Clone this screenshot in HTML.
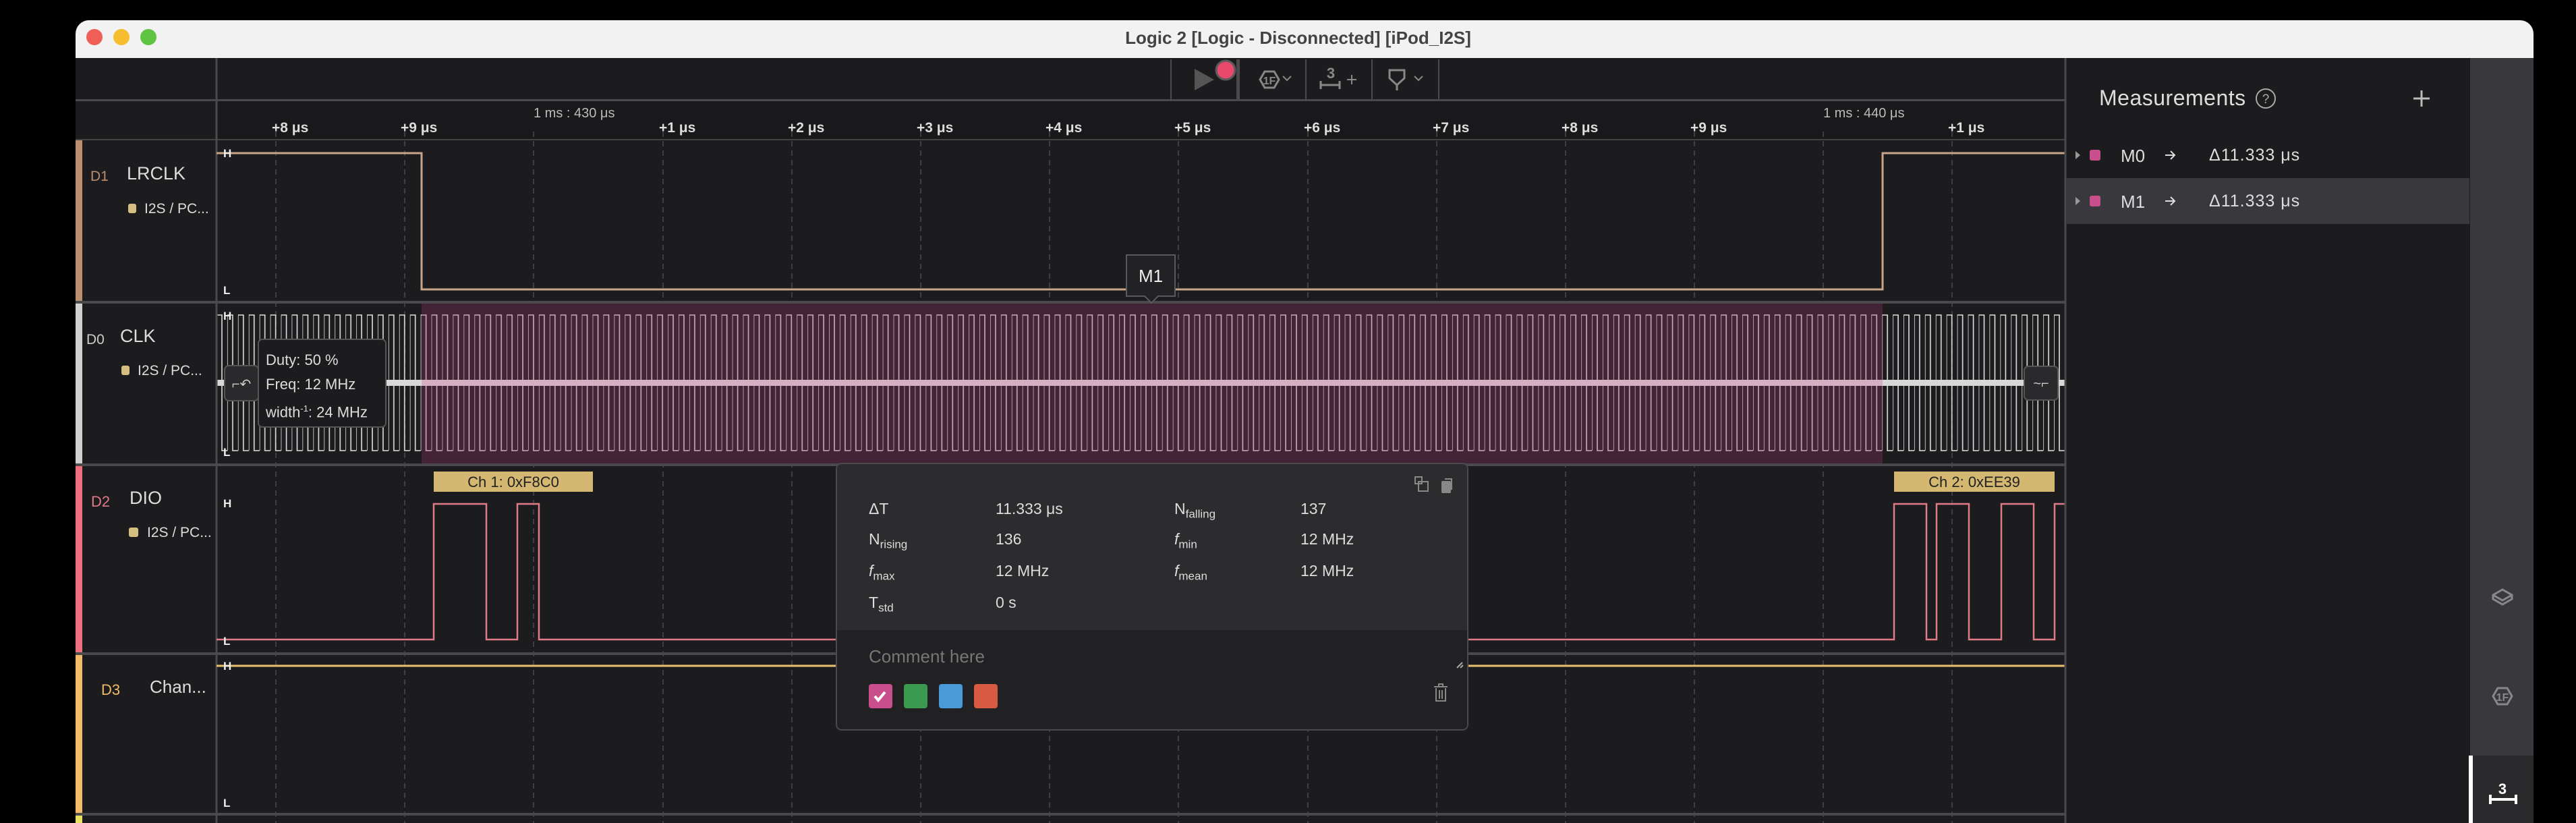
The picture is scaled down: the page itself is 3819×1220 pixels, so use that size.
<!DOCTYPE html>
<html><head><meta charset="utf-8"><style>
*{margin:0;padding:0;box-sizing:border-box}
body{width:3819px;height:1220px;background:#000;position:relative;overflow:hidden;font-family:"Liberation Sans",sans-serif}
.a{position:absolute;white-space:nowrap}
.t{color:#ddd}
</style></head><body>
<div class="a" style="left:112px;top:30px;width:3644px;height:56px;background:#f2f2f2;border-radius:20px 20px 0 0"></div>
<div class="a" style="left:128px;top:43px;width:24px;height:24px;border-radius:50%;background:#ee5f57"></div>
<div class="a" style="left:168px;top:43px;width:24px;height:24px;border-radius:50%;background:#f5bd2f"></div>
<div class="a" style="left:208px;top:43px;width:24px;height:24px;border-radius:50%;background:#5fc442"></div>
<div class="a" style="left:0;width:3819px;top:41px;text-align:center;font-size:26px;font-weight:bold;color:#444;padding-left:30px">Logic 2 [Logic - Disconnected] [iPod_I2S]</div>
<div class="a" style="left:112px;top:86px;width:3644px;height:1134px;background:#1c1c1e"></div>

<svg class="a" style="left:0;top:0" width="3819" height="1220" viewBox="0 0 3819 1220">
<defs>
<pattern id="cw" patternUnits="userSpaceOnUse" x="321" y="0" width="15.93" height="1220"><path d="M0,668V467H8V668H16" fill="none" stroke="#e0e0e0" stroke-width="1.6"/></pattern>
<pattern id="cp" patternUnits="userSpaceOnUse" x="321" y="0" width="15.93" height="1220"><path d="M0,668V467H8V668H16" fill="none" stroke="#cfaabb" stroke-width="1.6"/></pattern>
</defs>
<rect x="112" y="86" width="2950" height="62" fill="#1c1c1e"/>
<rect x="112" y="147" width="2950" height="3" fill="#4a4a4c"/>
<g stroke="#4a4a4c" stroke-width="2"><line x1="1736" y1="88" x2="1736" y2="148"/><line x1="1936" y1="88" x2="1936" y2="148"/><line x1="2034" y1="88" x2="2034" y2="148"/><line x1="2133" y1="88" x2="2133" y2="148"/></g>
<rect x="1833" y="88" width="5" height="60" fill="#4a4a4c"/>
<path d="M1771,102L1800,118L1771,134Z" fill="#555"/>
<circle cx="1817" cy="104" r="14" fill="#e8486a" stroke="#5a5a5c" stroke-width="3"/>
<path d="M1868,118l7,-12h14l7,12l-7,12h-14z" fill="none" stroke="#888" stroke-width="3"/>
<text x="1882" y="125" font-size="16" font-weight="bold" fill="#888" text-anchor="middle">1F</text>
<path d="M1902,113l6,6l6,-6" fill="none" stroke="#888" stroke-width="2"/>
<text x="1973" y="116" font-size="22" font-weight="bold" fill="#888" text-anchor="middle">3</text>
<path d="M1958,120v12M1958,126h28M1986,120v12" stroke="#888" stroke-width="3" fill="none"/>
<path d="M1997,118h14M2004,111v14" stroke="#888" stroke-width="2"/>
<path d="M2060,104h22v12l-11,10l-11,-10z M2071,126v8" fill="none" stroke="#888" stroke-width="3"/>
<path d="M2097,113l6,6l6,-6" fill="none" stroke="#888" stroke-width="2"/>
<rect x="321" y="150" width="2741" height="58" fill="#19191b"/>
<rect x="112" y="206" width="2950" height="2" fill="#444"/>
<g stroke="#3e3e40" stroke-width="2" stroke-dasharray="8 6">
<line x1="409" y1="195" x2="409" y2="1220"/><line x1="600" y1="195" x2="600" y2="1220"/><line x1="791" y1="195" x2="791" y2="1220"/><line x1="983" y1="195" x2="983" y2="1220"/><line x1="1174" y1="195" x2="1174" y2="1220"/><line x1="1365" y1="195" x2="1365" y2="1220"/><line x1="1556" y1="195" x2="1556" y2="1220"/><line x1="1747" y1="195" x2="1747" y2="1220"/><line x1="1939" y1="195" x2="1939" y2="1220"/><line x1="2130" y1="195" x2="2130" y2="1220"/><line x1="2321" y1="195" x2="2321" y2="1220"/><line x1="2512" y1="195" x2="2512" y2="1220"/><line x1="2703" y1="195" x2="2703" y2="1220"/><line x1="2894" y1="195" x2="2894" y2="1220"/>
</g>
<g font-size="21" font-weight="bold" fill="#ddd">
<text x="403" y="196">+8 μs</text><text x="594" y="196">+9 μs</text><text x="977" y="196">+1 μs</text><text x="1168" y="196">+2 μs</text><text x="1359" y="196">+3 μs</text><text x="1550" y="196">+4 μs</text><text x="1741" y="196">+5 μs</text><text x="1933" y="196">+6 μs</text><text x="2124" y="196">+7 μs</text><text x="2315" y="196">+8 μs</text><text x="2506" y="196">+9 μs</text><text x="2888" y="196">+1 μs</text>
</g>
<g font-size="20" fill="#bbb"><text x="791" y="174">1 ms : 430 μs</text><text x="2703" y="174">1 ms : 440 μs</text></g>
<rect x="112" y="208" width="10" height="238" fill="#b98f70"/>
<rect x="112" y="449" width="10" height="238" fill="#d0d0d0"/>
<rect x="112" y="690" width="10" height="277" fill="#ee7080"/>
<rect x="112" y="970" width="10" height="235" fill="#f2bb68"/>
<rect x="112" y="1208" width="10" height="12" fill="#e8e060"/>
<rect x="625" y="449" width="2166" height="238" fill="#432436"/>
<rect x="321" y="449" width="304" height="238" fill="url(#cw)"/>
<rect x="2791" y="449" width="271" height="238" fill="url(#cw)"/>
<rect x="625" y="449" width="2166" height="238" fill="url(#cp)"/>
<rect x="321" y="563" width="304" height="9" fill="#d8d8d8"/>
<rect x="2791" y="563" width="271" height="9" fill="#d8d8d8"/>
<rect x="625" y="563" width="2166" height="9" fill="#d4b0c0"/>
<g fill="#4a4a4c"><rect x="112" y="446" width="2950" height="4"/><rect x="112" y="687" width="2950" height="4"/><rect x="112" y="967" width="2950" height="4"/><rect x="112" y="1205" width="2950" height="4"/></g>
<line x1="321" y1="86" x2="321" y2="1220" stroke="#4a4a4c" stroke-width="3"/>
<path d="M321,227H625V429H2791V227H3062" fill="none" stroke="#c9a489" stroke-width="3"/>
<path d="M321,948H643V747H721V948H767V747H799V948H2808V747H2856V948H2871V747H2919V948H2967V747H3015V948H3046V747H3062" fill="none" stroke="#e07a88" stroke-width="2.5"/>
<rect x="643" y="699" width="236" height="30" fill="#d4b872"/>
<rect x="2808" y="699" width="238" height="30" fill="#d4b872"/>
<g font-size="22" fill="#222" text-anchor="middle"><text x="761" y="722">Ch 1: 0xF8C0</text><text x="2927" y="722">Ch 2: 0xEE39</text></g>
<line x1="321" y1="987" x2="3062" y2="987" stroke="#e8c070" stroke-width="3"/>
<g font-size="17" font-weight="bold" fill="#eee">
<text x="331" y="233">H</text><text x="331" y="436">L</text>
<text x="331" y="474">H</text><text x="331" y="676">L</text>
<text x="331" y="752">H</text><text x="331" y="956">L</text>
<text x="331" y="993">H</text><text x="331" y="1196">L</text>
</g>
<rect x="3062" y="86" width="600" height="1134" fill="#1c1c1e"/>
<line x1="3062" y1="86" x2="3062" y2="1220" stroke="#4a4a4c" stroke-width="3"/>
<rect x="3063" y="264" width="598" height="68" fill="#39393d"/>
<rect x="3662" y="86" width="94" height="1134" fill="#39383d"/>
<rect x="3662" y="1120" width="94" height="100" fill="#2a2a2c"/>
<rect x="3660" y="1120" width="6" height="100" fill="#fff"/>
<circle cx="3359" cy="146" r="14" fill="none" stroke="#aaa" stroke-width="2"/>
<text x="3359" y="153" font-size="19" fill="#aaa" text-anchor="middle">?</text>
<path d="M3578,146h24M3590,134v24" stroke="#bbb" stroke-width="3"/>
<path d="M3077,224l7,6l-7,6z" fill="#999"/><path d="M3077,292l7,6l-7,6z" fill="#999"/>
<rect x="3098" y="222" width="16" height="16" rx="3" fill="#c94f8c"/><rect x="3098" y="290" width="16" height="16" rx="3" fill="#c94f8c"/>
<path d="M3210,230h14m-6,-6l6,6l-6,6M3210,298h14m-6,-6l6,6l-6,6" fill="none" stroke="#ddd" stroke-width="2"/>
<path d="M3696,882l14,-8l14,8v6l-14,8l-14,-8z M3696,882l14,8l14,-8" fill="none" stroke="#888" stroke-width="3"/>
<path d="M3696,1032l7,-12h14l7,12l-7,12h-14z" fill="none" stroke="#888" stroke-width="3"/>
<text x="3710" y="1039" font-size="16" font-weight="bold" fill="#888" text-anchor="middle">1F</text>
<text x="3710" y="1177" font-size="22" font-weight="bold" fill="#fff" text-anchor="middle">3</text>
<path d="M3692,1178v14M3692,1185h38M3730,1178v14" stroke="#fff" stroke-width="4" fill="none"/>
<path d="M1670,378h72v61h-25l-10,10l-10,-10h-27z" fill="#222224" stroke="#5a5a5c" stroke-width="2"/>
<text x="1706" y="418" font-size="26" fill="#eee" text-anchor="middle">M1</text>
<rect x="383" y="503" width="189" height="130" rx="6" fill="#1c1c1e" stroke="#555" stroke-width="2"/>
<rect x="333" y="542" width="50" height="52" rx="6" fill="#2a2a2c" stroke="#555" stroke-width="2"/>
<text x="358" y="576" font-size="20" fill="#ccc" text-anchor="middle">⌐↶</text>
<rect x="3001" y="543" width="50" height="50" rx="6" fill="#2a2a2c" stroke="#555" stroke-width="2"/>
<text x="3026" y="575" font-size="20" fill="#ccc" text-anchor="middle">~⌐</text>
<rect x="1240" y="687" width="936" height="395" rx="8" fill="#212124" stroke="#4a4a4c" stroke-width="2"/>
<path d="M1241,934V695a7,7 0 0 1 7,-7H2168a7,7 0 0 1 7,7V934z" fill="#2c2c2f"/>
<rect x="2098" y="707" width="10" height="10" fill="none" stroke="#888" stroke-width="2"/><rect x="2103" y="714" width="14" height="14" fill="none" stroke="#888" stroke-width="2"/>
<rect x="2137" y="713" width="14" height="18" rx="2" fill="#888"/><path d="M2142,710h10v16" fill="none" stroke="#888" stroke-width="2"/>
<rect x="1288" y="1014" width="35" height="36" rx="4" fill="#c94f8c"/>
<path d="M1297,1032l5,6l10,-12" fill="none" stroke="#fff" stroke-width="4"/>
<rect x="1340" y="1014" width="35" height="36" rx="4" fill="#3a9a50"/>
<rect x="1392" y="1014" width="35" height="36" rx="4" fill="#4a9ad8"/>
<rect x="1444" y="1014" width="35" height="36" rx="4" fill="#d85a40"/>
<path d="M2126,1018h20M2133,1018v-4h6v4M2129,1020v19h14v-19M2134,1023v13M2138,1023v13" fill="none" stroke="#888" stroke-width="2"/>
<path d="M2160,990l8,-8M2165,990l4,-4" stroke="#aaa" stroke-width="2"/>
</svg>

<div class="a" style="left:134px;top:250px;font-size:21px;color:#b98f70">D1</div>
<div class="a t" style="left:188px;top:242px;font-size:27px">LRCLK</div>
<div class="a" style="left:190px;top:302px;width:12px;height:14px;border-radius:3px;background:#d4bf80"></div>
<div class="a t" style="left:214px;top:298px;font-size:21px">I2S / PC...</div>
<div class="a" style="left:128px;top:492px;font-size:21px;color:#ccc">D0</div>
<div class="a t" style="left:178px;top:483px;font-size:27px">CLK</div>
<div class="a" style="left:180px;top:542px;width:12px;height:14px;border-radius:3px;background:#d4bf80"></div>
<div class="a t" style="left:204px;top:538px;font-size:21px">I2S / PC...</div>
<div class="a" style="left:135px;top:731px;font-size:22px;color:#e07a88">D2</div>
<div class="a t" style="left:192px;top:723px;font-size:27px">DIO</div>
<div class="a" style="left:191px;top:782px;width:14px;height:14px;border-radius:3px;background:#d4bf80"></div>
<div class="a t" style="left:218px;top:778px;font-size:21px">I2S / PC...</div>
<div class="a" style="left:150px;top:1010px;font-size:22px;color:#f2bb68">D3</div>
<div class="a t" style="left:222px;top:1003px;font-size:26px">Chan...</div>
<div class="a t" style="left:394px;top:516px;font-size:22px;line-height:36px">Duty: 50 %<br>Freq: 12 MHz<br>width<sup style="font-size:13px">-1</sup>: 24 MHz</div>
<div class="a t" style="left:1288px;top:741px;font-size:23px">ΔT</div>
<div class="a t" style="left:1476px;top:741px;font-size:23px">11.333 μs</div>
<div class="a t" style="left:1288px;top:786px;font-size:23px">N<sub style="font-size:17px">rising</sub></div>
<div class="a t" style="left:1476px;top:786px;font-size:23px">136</div>
<div class="a t" style="left:1288px;top:833px;font-size:23px"><i>f</i><sub style="font-size:17px">max</sub></div>
<div class="a t" style="left:1476px;top:833px;font-size:23px">12 MHz</div>
<div class="a t" style="left:1288px;top:880px;font-size:23px">T<sub style="font-size:17px">std</sub></div>
<div class="a t" style="left:1476px;top:880px;font-size:23px">0 s</div>
<div class="a t" style="left:1741px;top:741px;font-size:23px">N<sub style="font-size:17px">falling</sub></div>
<div class="a t" style="left:1928px;top:741px;font-size:23px">137</div>
<div class="a t" style="left:1741px;top:786px;font-size:23px"><i>f</i><sub style="font-size:17px">min</sub></div>
<div class="a t" style="left:1928px;top:786px;font-size:23px">12 MHz</div>
<div class="a t" style="left:1741px;top:833px;font-size:23px"><i>f</i><sub style="font-size:17px">mean</sub></div>
<div class="a t" style="left:1928px;top:833px;font-size:23px">12 MHz</div>
<div class="a" style="left:1288px;top:958px;font-size:26px;color:#777">Comment here</div>
<div class="a" style="left:3112px;top:127px;font-size:32px;color:#ddd;letter-spacing:0.5px">Measurements</div>
<div class="a t" style="left:3144px;top:216px;font-size:26px">M0</div>
<div class="a t" style="left:3275px;top:216px;font-size:25px;letter-spacing:1px">Δ11.333 μs</div>
<div class="a t" style="left:3144px;top:284px;font-size:26px">M1</div>
<div class="a t" style="left:3275px;top:284px;font-size:25px;letter-spacing:1px">Δ11.333 μs</div>
</body></html>
